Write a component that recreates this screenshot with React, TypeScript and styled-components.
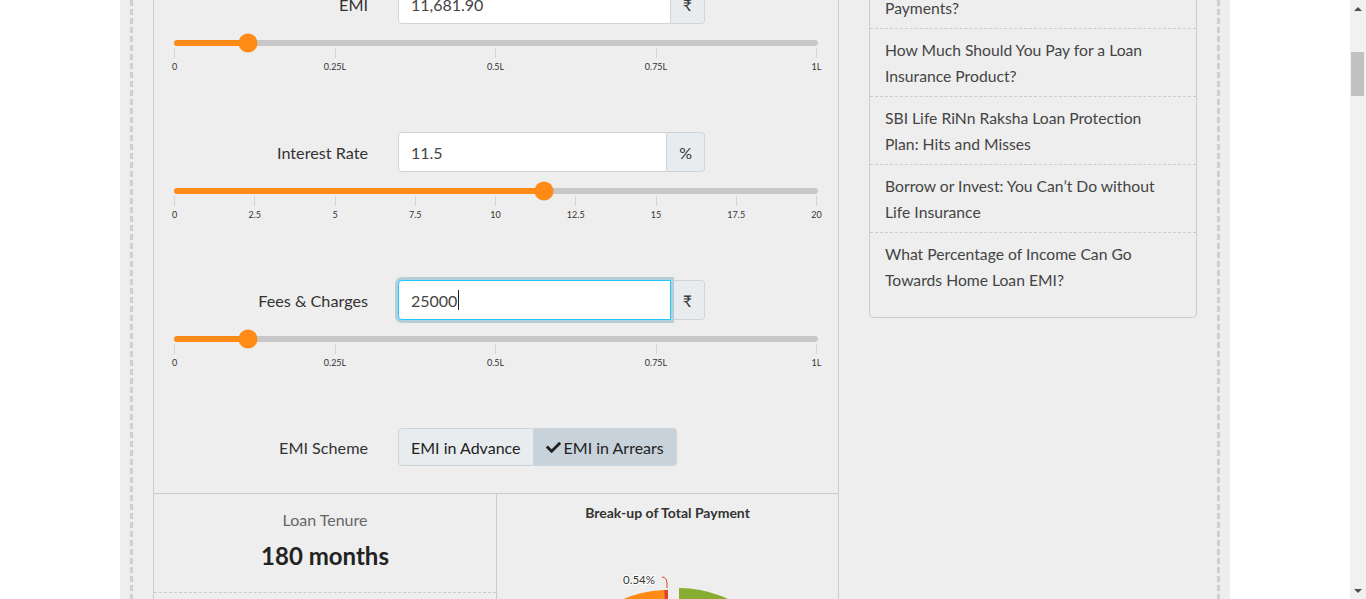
import React from 'react'
import styled, { createGlobalStyle } from 'styled-components'
import { FaCheck } from 'react-icons/fa'

const GlobalStyle = createGlobalStyle`
  html, body {
    margin: 0;
    padding: 0;
    overflow: hidden;
    background: #fff;
  }
  body {
    font-family: Lato, 'Noto Sans', 'DejaVu Sans', sans-serif;
    color: #333;
  }
  * {
    box-sizing: border-box;
  }
`

const Shell = styled.div`
  display: grid;
  grid-template-columns: 1fr 16px;
  height: 100vh;
  overflow: hidden;
`

const Viewport = styled.div`
  display: flex;
  justify-content: center;
  overflow: hidden;
`

const Column = styled.div`
  width: 1110px;
  flex-shrink: 0;
  background: #eee;
  padding: 0 10px;
`

const DashedBox = styled.div`
  min-height: 100%;
  padding: 0 23px;
  display: grid;
  align-content: start;
  background:
    repeating-linear-gradient(to bottom, #d0d0d0 0 6px, transparent 6px 9px) left top / 3px 100% no-repeat,
    repeating-linear-gradient(to bottom, #d0d0d0 0 6px, transparent 6px 9px) right top / 3px 100% no-repeat;
`

const Layout = styled.div`
  display: grid;
  grid-template-columns: 686px 328px;
  column-gap: 30px;
  align-items: start;
  margin-top: -40px;
`

const Panel = styled.section`
  border-left: 1px solid #ccc;
  border-right: 1px solid #ccc;
`

const Form = styled.div`
  display: flex;
  flex-direction: column;
  gap: 60px;
  padding: 24px 20px 27px;
`

const FormRow = styled.div`
  display: grid;
  grid-template-columns: 194px 307px;
  column-gap: 30px;
  align-items: center;
`

const Label = styled.label`
  text-align: right;
  font-size: 16.2px;
  color: #333;
`

const InputGroup = styled.div`
  display: flex;
  height: 40px;
`

const FieldBox = styled.div<{ $focused?: boolean }>`
  flex: 1;
  display: flex;
  align-items: center;
  padding: 0 12px;
  background: #fff;
  border: 1px solid ${p => (p.$focused ? '#1ec8ff' : '#cdd4da')};
  border-radius: 4px 0 0 4px;
  box-shadow: ${p => (p.$focused ? '0 0 0 3px #b4cfdc' : 'none')};
  font-size: 16px;
  color: #444;
  position: relative;
  z-index: 1;
`

const Caret = styled.span`
  width: 1px;
  height: 20px;
  background: #222;
  margin-left: 1px;
`

const Addon = styled.div`
  display: flex;
  align-items: center;
  padding: 0 12px;
  background: #e9ecef;
  border: 1px solid #cdd4da;
  border-left: 0;
  border-radius: 0 4px 4px 0;
  font-size: 16px;
  color: #333;
`

const Slider = styled.div`
  margin-top: 16px;
`

const Track = styled.div`
  position: relative;
  height: 6px;
  border-radius: 3px;
  background: #c8c8c8;
`

const Fill = styled.div`
  height: 100%;
  border-radius: 3px;
  background: #ff8a16;
`

const Thumb = styled.span`
  position: absolute;
  top: 50%;
  width: 19px;
  height: 19px;
  border-radius: 50%;
  background: #ff8a16;
  transform: translate(-50%, -50%);
`

const Scale = styled.div`
  display: flex;
  justify-content: space-between;
  margin-top: 2px;
  padding-right: 1px;
`

const Tick = styled.div`
  width: 1px;
  display: flex;
  flex-direction: column;
  align-items: center;
`

const TickLine = styled.span`
  width: 1px;
  height: 10px;
  flex-shrink: 0;
  background: #cfd5db;
`

const TickLabel = styled.span`
  margin-top: 3px;
  font-size: 9px;
  line-height: 11px;
  color: #333;
  white-space: nowrap;
`

const ButtonGroup = styled.div`
  display: flex;
  height: 38px;
`

const SchemeButton = styled.div<{ $active?: boolean }>`
  display: flex;
  align-items: center;
  gap: 3px;
  padding: 0 12px;
  font-size: 16px;
  color: #222;
  background: ${p => (p.$active ? '#c8d2da' : '#e8ecef')};
  border: 1px solid #cdd4da;

  &:first-child {
    border-radius: 4px 0 0 4px;
  }
  &:last-child {
    border-left: 0;
    border-radius: 0 4px 4px 0;
  }
`

const Results = styled.div`
  display: grid;
  grid-template-columns: 343px 1fr;
  border-top: 1px solid #ccc;
`

const StatList = styled.div`
  border-right: 1px solid #ccc;
`

const StatItem = styled.div`
  text-align: center;
  padding: 16px 0 18px;
  border-bottom: 1px dashed #ccc;
`

const StatLabel = styled.div`
  font-size: 16px;
  line-height: 20px;
  color: #666;
`

const StatValue = styled.div`
  margin-top: 8px;
  font-size: 24px;
  line-height: 36px;
  font-weight: 700;
  color: #222;
`

const ChartCell = styled.div`
  display: flex;
  flex-direction: column;
  align-items: center;
`

const ChartTitle = styled.div`
  padding-top: 12px;
  font-size: 14px;
  line-height: 14px;
  font-weight: 700;
  color: #333;
`

const Sidebar = styled.aside`
  border: 1px solid #ccc;
  border-radius: 4px;
  background: #eee;
  padding-bottom: 17px;
`

const PostList = styled.ul`
  list-style: none;
  margin: 0;
  padding: 0;
`

const PostItem = styled.li`
  padding: 8px 15px 7px;
  font-size: 15.7px;
  line-height: 26px;
  color: #444;
  border-bottom: 1px dashed #ccc;

  &:last-child {
    border-bottom: 0;
  }
`

const Scrollbar = styled.div`
  height: 100vh;
  background: #f1f1f1;
  display: flex;
  flex-direction: column;
`

const ScrollArrow = styled.div<{ $down?: boolean }>`
  height: 17px;
  display: flex;
  align-items: center;
  justify-content: center;

  &::after {
    content: '';
    border-left: 4px solid transparent;
    border-right: 4px solid transparent;
    ${p =>
      p.$down ? 'border-top: 4px solid #505050;' : 'border-bottom: 4px solid #505050;'}
  }
`

const ScrollTrack = styled.div`
  flex: 1;
  padding-top: 35px;
`

const ScrollThumb = styled.div`
  height: 44px;
  margin: 0 2px 0 1px;
  background: #c1c1c1;
`

type SliderProps = { pct: number; ticks: string[] }

const RangeSlider = ({ pct, ticks }: SliderProps) => (
  <Slider>
    <Track>
      <Fill style={{ width: `${pct}%` }} />
      <Thumb style={{ left: `${pct}%` }} />
    </Track>
    <Scale>
      {ticks.map(t => (
        <Tick key={t}>
          <TickLine />
          <TickLabel>{t}</TickLabel>
        </Tick>
      ))}
    </Scale>
  </Slider>
)

const lakhTicks = ['0', '0.25L', '0.5L', '0.75L', '1L']
const rateTicks = ['0', '2.5', '5', '7.5', '10', '12.5', '15', '17.5', '20']

const fields = [
  { label: 'EMI', value: '11,681.90', unit: '₹', pct: 11.5, ticks: lakhTicks },
  { label: 'Interest Rate', value: '11.5', unit: '%', pct: 57.5, ticks: rateTicks },
  { label: 'Fees & Charges', value: '25000', unit: '₹', pct: 11.5, ticks: lakhTicks, focused: true },
]

const posts = [
  ['Prepay Your Loan or Make Higher EMI', 'Payments?'],
  ['How Much Should You Pay for a Loan', 'Insurance Product?'],
  ['SBI Life RiNn Raksha Loan Protection', 'Plan: Hits and Misses'],
  ['Borrow or Invest: You Can’t Do without', 'Life Insurance'],
  ['What Percentage of Income Can Go', 'Towards Home Loan EMI?'],
]

const polar = (cx: number, cy: number, r: number, deg: number) => {
  const a = ((deg - 90) * Math.PI) / 180
  return [cx + r * Math.cos(a), cy + r * Math.sin(a)]
}

const slicePath = (cx: number, cy: number, r: number, a0: number, a1: number) => {
  const [x0, y0] = polar(cx, cy, r, a0)
  const [x1, y1] = polar(cx, cy, r, a1)
  const large = a1 - a0 > 180 ? 1 : 0
  return `M${cx} ${cy} L${x0} ${y0} A${r} ${r} 0 ${large} 1 ${x1} ${y1} Z`
}

const PieChart = () => {
  const cx = 171
  const cy = 185
  const r = 115
  return (
    <svg width="341" height="300" viewBox="0 0 341 300">
      <path d={slicePath(cx, cy, r, 0, 169.2)} fill="#86ad30" transform="translate(11 -2)" />
      <path d={slicePath(cx, cy, r, 169.2, 358.06)} fill="#ff8a16" />
      <path d={slicePath(cx, cy, r, 358.06, 360)} fill="#e5431f" />
      <path d="M165 57 Q170 57 170 64 L170 68" fill="none" stroke="#e5431f" strokeWidth="1" />
      <text
        x="158"
        y="64"
        textAnchor="end"
        fontSize="11.5"
        fontFamily="Lato, sans-serif"
        fill="#333"
        stroke="#fff"
        strokeWidth="2"
        paintOrder="stroke"
      >
        0.54%
      </text>
    </svg>
  )
}

export default function App() {
  return (
    <>
      <GlobalStyle />
      <Shell>
        <Viewport>
          <Column>
            <DashedBox>
              <Layout>
                <Panel>
                  <Form>
                    {fields.map(f => (
                      <div key={f.label}>
                        <FormRow>
                          <Label>{f.label}</Label>
                          <InputGroup>
                            <FieldBox $focused={f.focused}>
                              {f.value}
                              {f.focused && <Caret />}
                            </FieldBox>
                            <Addon>{f.unit}</Addon>
                          </InputGroup>
                        </FormRow>
                        <RangeSlider pct={f.pct} ticks={f.ticks} />
                      </div>
                    ))}
                    <FormRow>
                      <Label>EMI Scheme</Label>
                      <ButtonGroup>
                        <SchemeButton>EMI in Advance</SchemeButton>
                        <SchemeButton $active>
                          <FaCheck size={15} />
                          EMI in Arrears
                        </SchemeButton>
                      </ButtonGroup>
                    </FormRow>
                  </Form>
                  <Results>
                    <StatList>
                      <StatItem>
                        <StatLabel>Loan Tenure</StatLabel>
                        <StatValue>180 months</StatValue>
                      </StatItem>
                      <StatItem>
                        <StatLabel>Loan Amount</StatLabel>
                        <StatValue>₹ 10,00,000</StatValue>
                      </StatItem>
                    </StatList>
                    <ChartCell>
                      <ChartTitle>Break-up of Total Payment</ChartTitle>
                      <PieChart />
                    </ChartCell>
                  </Results>
                </Panel>
                <Sidebar>
                  <PostList>
                    {posts.map(lines => (
                      <PostItem key={lines[0]}>
                        {lines[0]}
                        <br />
                        {lines[1]}
                      </PostItem>
                    ))}
                  </PostList>
                </Sidebar>
              </Layout>
            </DashedBox>
          </Column>
        </Viewport>
        <Scrollbar>
          <ScrollArrow />
          <ScrollTrack>
            <ScrollThumb />
          </ScrollTrack>
          <ScrollArrow $down />
        </Scrollbar>
      </Shell>
    </>
  )
}
